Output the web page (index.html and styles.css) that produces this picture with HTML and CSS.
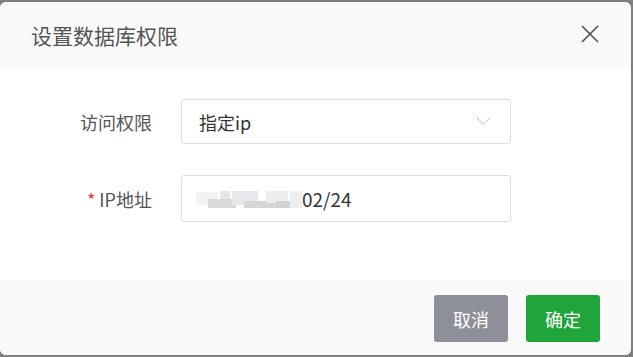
FILE: index.html
```html
<!DOCTYPE html>
<html lang="zh">
<head>
<meta charset="utf-8">
<link rel="stylesheet" href="styles.css">
</head>
<body>
<div class="dialog">
  <div class="header">
    <span class="title">设置数据库权限</span>
    <svg class="close" width="20" height="20" viewBox="0 0 20 20"><path d="M2 2 L18 18 M18 2 L2 18" stroke="#555" stroke-width="1.7" fill="none"/></svg>
  </div>
  <div class="body">
    <div class="row">
      <label class="label">访问权限</label>
      <div class="field select">
        <span class="value">指定ip</span>
        <svg class="arrow" width="15" height="8" viewBox="0 0 15 8"><path d="M1 1 L7.5 7 L14 1" stroke="#bbb" stroke-width="1" fill="none"/></svg>
      </div>
    </div>
    <div class="row row2">
      <label class="label"><span class="req">*</span> IP地址</label>
      <div class="field">
        <span class="blur">
          <i class="b1"></i><i class="b2"></i><i class="b3"></i><i class="b4"></i><i class="b5"></i><i class="b6"></i><i class="b7"></i><i class="b8"></i>
        </span>
        <span class="value num">02/24</span>
      </div>
    </div>
  </div>
  <div class="footer">
    <button class="btn cancel">取消</button>
    <button class="btn ok">确定</button>
  </div>
</div>
</body>
</html>
```
FILE: styles.css
```css
html, body { margin: 0; padding: 0; }
body {
  background: #7f7f7f;
  width: 633px;
  height: 357px;
  font-family: "Noto Sans CJK SC", "Noto Sans", sans-serif;
  overflow: hidden;
}
.dialog {
  margin-top: 2px;
  width: 631px;
  height: 353px;
  background: #fff;
  border-radius: 6px;
  overflow: hidden;
  display: flex;
  flex-direction: column;
}
.header {
  height: 66px;
  background: #fafafa;
  display: flex;
  align-items: center;
  justify-content: space-between;
  padding: 0 31px 0 31px;
}
.title {
  font-size: 21px;
  color: #555;
  margin-top: -1px;
}
.close { margin-top: -2px; }
.body {
  height: 212px;
  padding-top: 31px;
  box-sizing: border-box;
}
.row {
  display: flex;
  align-items: center;
}
.row2 { margin-top: 31px; }
.label {
  width: 181px;
  flex-shrink: 0;
  text-align: right;
  padding-right: 29px;
  box-sizing: border-box;
  font-size: 18px;
  color: #555;
}
.req { color: #e53935; }
.field {
  width: 330px;
  height: 47px;
  box-sizing: border-box;
  border: 1px solid #ddd;
  border-radius: 3px;
  display: flex;
  align-items: center;
  padding-left: 17px;
  position: relative;
}
.select { height: 45px; }
.value {
  font-size: 18px;
  color: #333;
}
.num { font-size: 19px; }
.arrow { position: absolute; right: 19px; top: 17px; }
.blur {
  display: inline-block;
  height: 20px;
  margin-left: -3px;
  width: 106px;
  position: relative;
}
.blur i { display: block; position: absolute; }
.b1 { left: 0; top: 3px; width: 22px; height: 13px; background: #f2f2f2; }
.b2 { left: 12px; top: 10px; width: 28px; height: 9px; background: #d9d9d9; }
.b3 { left: 36px; top: 2px; width: 26px; height: 14px; background: #e6e8ea; }
.b4 { left: 48px; top: 12px; width: 34px; height: 7px; background: #d6d6d6; }
.b5 { left: 70px; top: 2px; width: 22px; height: 12px; background: #ededed; }
.b6 { left: 80px; top: 12px; width: 20px; height: 7px; background: #d2d2d2; }
.b7 { left: 94px; top: 2px; width: 12px; height: 17px; background: #eeeeee; }
.b8 { left: 24px; top: 2px; width: 10px; height: 8px; background: #e4e6e8; }
.footer {
  flex: 1;
  background: #f9f9f9;
  display: flex;
  justify-content: flex-end;
  align-items: flex-start;
  padding: 15px 31px 0 0;
  gap: 18px;
}
.btn {
  width: 74px;
  height: 47px;
  border: none;
  border-radius: 3px;
  color: #fff;
  font-family: "Noto Sans CJK SC", sans-serif;
  font-size: 18px;
  padding: 0;
}
.cancel { background: #8e9099; }
.ok { background: #20a53a; }
```
